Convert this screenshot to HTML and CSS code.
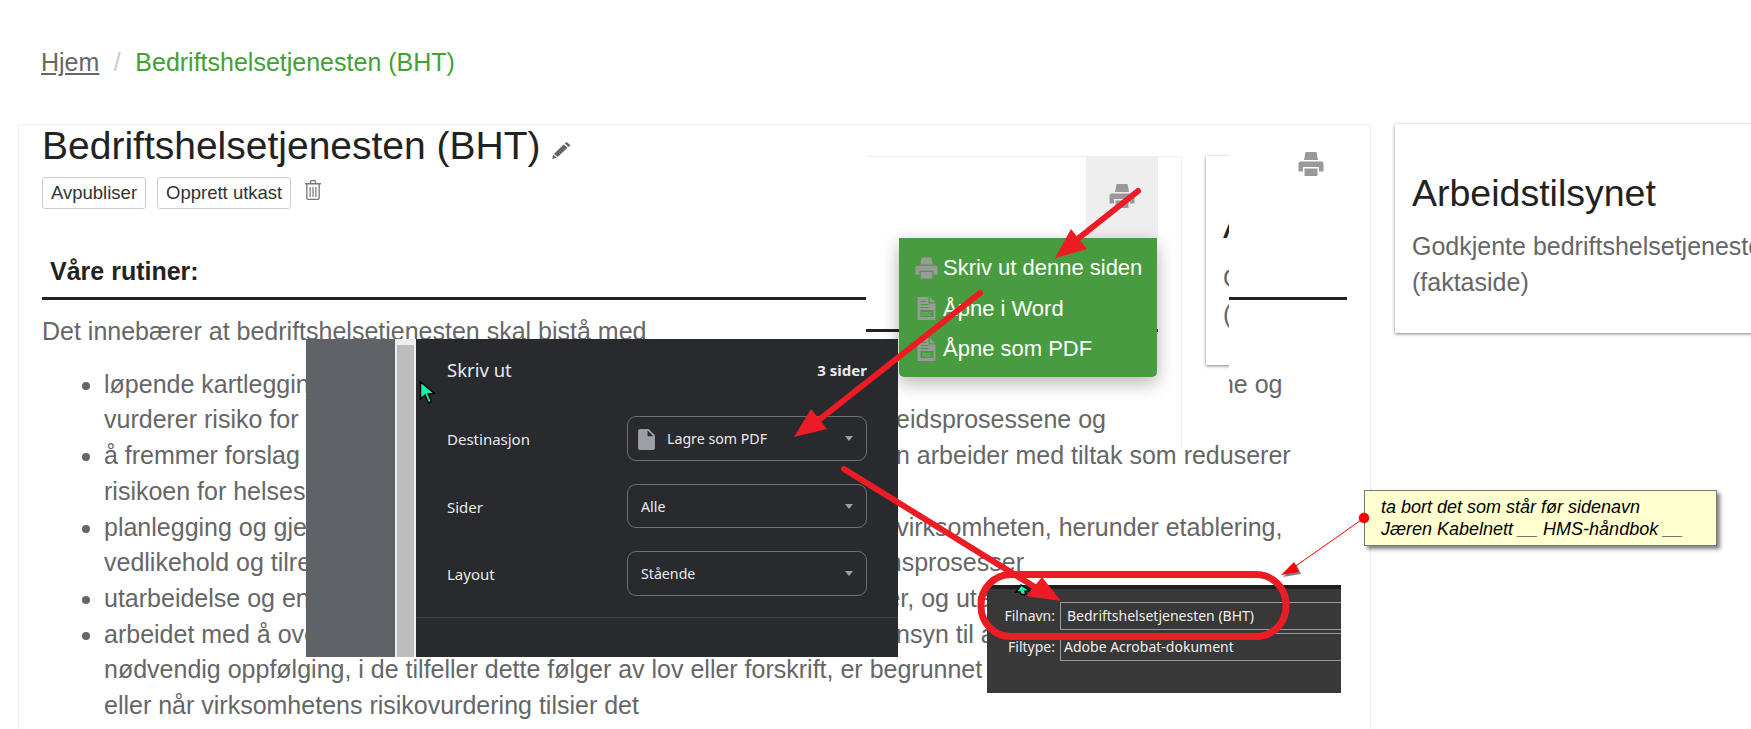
FILE: index.html
```html
<!DOCTYPE html>
<html lang="no">
<head>
    <meta charset="UTF-8">
    <title>Bedriftshelsetjenesten (BHT)</title>
    <link rel="stylesheet" href="styles.css">
</head>
<body>
    <nav class="breadcrumb">
        <a href="#">Hjem</a>
        <span class="crumb-sep">/</span>
        <span class="crumb-current">Bedriftshelsetjenesten (BHT)</span>
    </nav>

    <div class="page-row">
        <main class="main-card">
            <h1 class="page-title">Bedriftshelsetjenesten (BHT)
                <svg class="edit-icon" viewBox="0 0 20 18"><path d="M13.5 1.5l2-1.500 4 3.500-2 1.800zM12.300 2.600l4 3.600L6 16 2 12.400zM1.400 13.400l3.600 3.300L0 18z"/></svg>
            </h1>
            <div class="actions">
                <button class="btn">Avpubliser</button>
                <button class="btn">Opprett utkast</button>
                <svg class="trash-icon" viewBox="0 0 16 20"><path d="M5 3V1.500C5 .7 5.700 0 6.500 0h3C10.300 0 11 .7 11 1.500V3h5v1.500h-1.200V18c0 1.100-.9 2-2 2H3.200c-1.100 0-2-.9-2-2V4.500H0V3zm1.200 0h3.600V1.200H6.200zM2.500 4.500V18c0 .4.300.8.700.8h9.600c.4 0 .7-.4.700-.8V4.500zM4.500 7h1.200v10H4.500zm2.900 0h1.200v10H7.400zm2.900 0h1.200v10h-1.200z"/></svg>
            </div>
            <h2 class="section-title">Våre rutiner:</h2>
            <p class="intro">Det innebærer at bedriftshelsetjenesten skal bistå med</p>
            <ul class="duties">
                <li>løpende kartlegging av arbeidsmiljøet, herunder for hvordan virksomheten kartlegger arbeidsforholdene og<br>vurderer risiko for helseskade ved arbeid, og hvordan dette påvirker arbeidsprosessene og</li>
                <li>å fremmer forslag til forbedringer og gir råd til ledelsen, når virksomheten arbeider med tiltak som reduserer<br>risikoen for helseskader</li>
                <li>planlegging og gjennomføring til forebyggende, helsefremmende tiltak i virksomheten, herunder etablering,<br>vedlikehold og tilrettelegging av arbeidsplassen i arbeids- og produksjonsprosesser</li>
                <li>utarbeidelse og endring av alle planer, rutiner, retningslinjer og instrukser, og utenfor</li>
                <li>arbeidet med å overvåke nøye helsen for arbeidstakerne med særlig hensyn til arbeid<br>nødvendig oppfølging, i de tilfeller dette følger av lov eller forskrift, er begrunnet i risiko<br>eller når virksomhetens risikovurdering tilsier det</li>
            </ul>
        </main>
        <aside class="info-card">
            <h3>Arbeidstilsynet</h3>
            <p>Godkjente bedriftshelsetjenester<br>(faktaside)</p>
        </aside>
    </div>

    <!-- innlimte utklipp oppå siden -->
    <div class="paste-cover">
        <div class="paste-rule"></div>
        <div class="print-box">
            <svg class="print-icon" viewBox="0 0 26 24"><use href="#printer"/></svg>
        </div>
    </div>
    <div class="paste-edge"></div>

    <div class="mini-clip">
        <div class="info-card mini-card">
            <h3>Arbeidstilsynet</h3>
            <p>Godkjente bedriftshelsetjenester<br>(faktaside)</p>
        </div>
    </div>
    <svg class="print-icon print-loose" viewBox="0 0 26 24"><use href="#printer"/></svg>

    <div class="print-menu">
        <a class="menu-item">
            <svg class="menu-icon" viewBox="0 0 26 24"><use href="#printer"/></svg>
            Skriv ut denne siden
        </a>
        <a class="menu-item">
            <svg class="menu-icon doc-icon" viewBox="0 0 18 23">
                <path d="M0 0h11v6.500h7V23H0zM12.200 0L18 5.300h-5.800z"/>
                <path class="doc-cut" d="M3 4h6v1H3zM3 7h8v1H3zM3 10h8v1H3zM3 13h13v7H3z"/>
                <text x="4" y="18.500">DOC</text>
            </svg>
            Åpne i Word
        </a>
        <a class="menu-item">
            <svg class="menu-icon doc-icon" viewBox="0 0 18 23">
                <path d="M0 0h11v6.500h7V23H0zM12.200 0L18 5.300h-5.800z"/>
                <path class="doc-cut" d="M3 4h6v1H3zM3 7h8v1H3zM3 10h8v1H3zM3 13h13v7H3z"/>
                <text x="4.500" y="18.500">PDF</text>
            </svg>
            Åpne som PDF
        </a>
    </div>

    <div class="print-dialog">
        <div class="preview-pane"></div>
        <div class="preview-scroll"></div>
        <div class="print-settings">
            <div class="print-head">
                <span class="print-title">Skriv ut</span>
                <span class="print-pages">3 sider</span>
            </div>
            <div class="print-row">
                <span>Destinasjon</span>
                <div class="fake-select">
                    <svg class="file-icon" viewBox="4 2 16 20"><path d="M6 2c-1.100 0-2 .9-2 2v16c0 1.100.9 2 2 2h12c1.100 0 2-.9 2-2V8l-6-6H6zm7 7V3.500L18.500 9H13z"/></svg>
                    <span class="select-pdf">Lagre som PDF</span>
                </div>
            </div>
            <div class="print-row">
                <span>Sider</span>
                <div class="fake-select">Alle</div>
            </div>
            <div class="print-row">
                <span>Layout</span>
                <div class="fake-select">Stående</div>
            </div>
            <div class="print-sep"></div>
        </div>
    </div>

    <div class="save-dialog">
        <div class="save-strip"></div>
        <div class="save-row">
            <label>Filnavn:</label>
            <div class="save-input save-name">Bedriftshelsetjenesten (BHT)</div>
        </div>
        <div class="save-row">
            <label>Filtype:</label>
            <div class="save-input">Adobe Acrobat-dokument</div>
        </div>
    </div>

    <div class="note">ta bort det som står før sidenavn<br>Jæren Kabelnett __ HMS-håndbok __</div>

    <svg class="markup" viewBox="0 0 1751 729">
        <defs>
            <g id="printer">
                <path d="M7.500 0h11l1.500 8H6z"/>
                <path d="M2.500 9.500h21c1 0 2 1 2 2v8h-4.500v-4.500H5v4.500H.5v-8c0-1 1-2 2-2z"/>
                <path d="M6.500 16.500h13V24h-13z"/>
            </g>
        </defs>
        <!-- muspeker -->
        <path class="cursor" d="M420.500 382v17l4.500-4 3.500 8 3-1.500-3.500-7.500 6.500-.5z"/>
        <path class="cursor" d="M1021 585l-5 7 4-.5 1 3 5 0-1-3 5-.5z"/>
        <!-- piler -->
        <line class="arrow" x1="1138" y1="191" x2="1070" y2="245"/>
        <polygon class="arrow-head" points="1055,258 1071,229 1087,249"/>
        <line class="arrow" x1="980" y1="293" x2="815" y2="423"/>
        <polygon class="arrow-head" points="794,437 811,409 827,429"/>
        <line class="arrow" x1="844" y1="469" x2="1038" y2="589"/>
        <polygon class="arrow-head" points="1061,601 1026,596 1042,577"/>
        <rect class="ring" x="981" y="574.500" width="305" height="62" rx="30"/>
        <!-- merknad -->
        <line class="note-line" x1="1364" y1="518" x2="1293" y2="568"/>
        <polygon class="note-tip-shadow" points="1283,577 1296,564 1301,574"/>
        <polygon class="note-tip" points="1281,575 1294,562 1299,572"/>
        <circle class="note-dot" cx="1364" cy="518" r="5"/>
    </svg>
</body>
</html>
```

FILE: styles.css
```css
* {
    box-sizing: border-box;
}
html, body {
    margin: 0;
    height: 729px;
    overflow: hidden;
}
body {
    position: relative;
    background: #fff;
    font-family: "Liberation Sans", Arial, sans-serif;
    font-size: 25px;
    line-height: 35.7px;
    color: #666;
}
.breadcrumb {
    display: flex;
    gap: 14.500px;
    height: 124px;
    padding: 45px 0 0 41px;
    font-size: 25px;
}
.breadcrumb a {
    color: #666;
    text-decoration: underline;
}
.crumb-sep {
    color: #ccc;
}
.crumb-current {
    color: #43a035;
}
.page-row {
    display: flex;
    align-items: flex-start;
    gap: 24px;
    padding-left: 18px;
}
.main-card {
    flex: none;
    width: 1353px;
    height: 640px;
    padding: 0 23px;
    border: 1px solid #eee;
}
.page-title {
    margin: 0;
    font-size: 39px;
    font-weight: 400;
    line-height: 42px;
    color: #222;
}
.edit-icon {
    width: 19px;
    height: 17px;
    margin-left: 1px;
    fill: #666;
}
.actions {
    display: flex;
    align-items: flex-start;
    gap: 11px;
    margin-top: 10px;
}
.btn {
    height: 32px;
    padding: 0 8px;
    border: 1px solid #ccc;
    border-radius: 3px;
    background: #fff;
    font-family: inherit;
    font-size: 18.500px;
    color: #333;
}
.trash-icon {
    width: 16px;
    height: 20px;
    margin: 3px 0 0 3px;
    fill: #777;
}
.section-title {
    margin: 47px 0 0;
    padding: 0 0 11px 8px;
    border-bottom: 3px solid #222;
    font-size: 25px;
    line-height: 30px;
    color: #222;
}
.intro {
    margin: 14px 0 0;
}
.duties {
    margin: 17px 0 0;
    padding-left: 62px;
}

.info-card {
    flex: none;
    width: 600px;
    height: 209px;
    padding: 48px 17px 0;
    background: #fff;
    box-shadow: 0 1px 3px rgba(0, 0, 0, 0.5);
}
.info-card h3 {
    margin: 0;
    font-size: 37.500px;
    font-weight: 400;
    line-height: 42px;
    color: #222;
}
.info-card p {
    margin: 15px 0 0;
}

/* utklipp */
.paste-cover {
    position: absolute;
    left: 866px;
    top: 125px;
    width: 363px;
    height: 275px;
    background: #fff;
}
.paste-rule {
    position: absolute;
    left: 0;
    top: 204px;
    width: 292px;
    height: 3px;
    background: #222;
}
.paste-cover::before {
    content: "";
    position: absolute;
    left: 0;
    top: 31px;
    width: 316px;
    height: 1px;
    background: #eee;
}
.paste-edge {
    position: absolute;
    left: 1181px;
    top: 157px;
    width: 1px;
    height: 293px;
    background: #eee;
}
.print-box {
    position: absolute;
    left: 220px;
    top: 32px;
    width: 72px;
    height: 81px;
    background: #eee;
}
.print-icon {
    width: 26px;
    height: 24px;
    fill: #999;
}
.print-box .print-icon {
    position: absolute;
    left: 23px;
    top: 27px;
}
.print-loose {
    position: absolute;
    left: 1298px;
    top: 152px;
}
.mini-clip {
    position: absolute;
    left: 1196px;
    top: 150px;
    width: 33px;
    height: 225px;
    overflow: hidden;
}
.mini-card {
    margin: 6px 0 0 10px;
}

.print-menu {
    position: absolute;
    left: 899px;
    top: 238px;
    width: 258px;
    height: 139px;
    padding-top: 10px;
    border-radius: 0 0 5px 5px;
    background: #489b3f;
    box-shadow: 0 6px 18px rgba(0, 0, 0, 0.3);
    color: #fff;
    font-size: 22px;
}
.menu-item {
    display: flex;
    align-items: center;
    gap: 5px;
    height: 40.500px;
    padding-left: 16px;
}
.menu-icon {
    width: 23px;
    height: 22px;
    fill: #999;
}
.doc-icon {
    padding: 0 2px;
    height: 23px;
}
.doc-cut {
    fill: #489b3f;
}
.doc-icon text {
    font-family: "Liberation Sans", Arial, sans-serif;
    font-size: 4.500px;
    font-weight: 700;
}

.print-dialog {
    position: absolute;
    left: 306px;
    top: 339px;
    width: 592px;
    height: 318px;
    display: flex;
    background: #292a2d;
    font-family: "Noto Sans", sans-serif;
    font-size: 15px;
    line-height: 20px;
    color: #e8eaed;
}
.preview-pane {
    flex: none;
    width: 89px;
    background: #5f6267;
}
.preview-scroll {
    flex: none;
    width: 21px;
    border: solid #eee;
    border-width: 6px 2px 0;
    background: #bdbdbd;
}
.print-settings {
    flex: 1;
    padding: 0 31px;
    position: relative;
}
.print-head {
    display: flex;
    justify-content: space-between;
    align-items: center;
    height: 62px;
    margin-bottom: 15px;
}
.print-title {
    font-size: 18.500px;
}
.print-pages {
    font-size: 15px;
    font-weight: 700;
}
.print-row {
    display: grid;
    grid-template-columns: 180px 1fr;
    align-items: center;
    height: 44.500px;
    margin-bottom: 23px;
}
.print-row > span {
    padding-top: 2px;
}
.fake-select {
    position: relative;
    display: flex;
    align-items: center;
    height: 44.500px;
    padding: 2px 0 0 13px;
    border: 1px solid #6e6f72;
    border-radius: 9px;
    font-size: 14.200px;
}
.fake-select::after {
    content: "";
    position: absolute;
    right: 13px;
    top: 19px;
    border: 4px solid transparent;
    border-top: 5px solid #9aa0a6;
}
.file-icon {
    width: 17px;
    height: 21px;
    margin-right: 12px;
    margin-left: -3px;
    fill: #9aa0a6;
}
.print-sep {
    position: absolute;
    left: 0;
    right: 0;
    top: 278px;
    height: 1px;
    background: #3f4043;
}

.save-dialog {
    position: absolute;
    left: 987px;
    top: 585px;
    width: 354px;
    height: 108px;
    background: #383838;
    font-family: "Noto Sans", sans-serif;
    font-size: 14px;
    line-height: 26px;
    color: #eee;
}
.save-strip {
    height: 4px;
    margin-bottom: 13px;
    background: #1e1e1e;
}
.save-row {
    display: grid;
    grid-template-columns: 68px 1fr;
    column-gap: 5px;
    align-items: center;
    margin-bottom: 3px;
}
.save-row label {
    text-align: right;
}
.save-input {
    height: 28px;
    padding-left: 3px;
    border: 1px solid #9a9a9a;
    border-right: 0;
}
.save-name {
    padding-left: 6px;
}

.note {
    position: absolute;
    left: 1364px;
    top: 490px;
    width: 353px;
    height: 56px;
    padding: 5px 0 0 16px;
    border: 1px solid #777;
    background: #ffffcf;
    box-shadow: 3px 3px 4px rgba(0, 0, 0, 0.5);
    font-size: 18px;
    font-style: italic;
    line-height: 22px;
    color: #000;
}

.markup {
    position: absolute;
    left: 0;
    top: 0;
    width: 1751px;
    height: 729px;
    pointer-events: none;
}
.cursor {
    fill: #19f2b0;
    stroke: #000;
    stroke-width: 1.500;
}
.arrow {
    stroke: #ed1c24;
    stroke-width: 6;
    stroke-linecap: round;
}
.arrow-head {
    fill: #ed1c24;
}
.ring {
    fill: none;
    stroke: #ed1c24;
    stroke-width: 7;
}
.note-line {
    stroke: #f00;
    stroke-width: 1;
}
.note-tip {
    fill: #f00;
}
.note-tip-shadow {
    fill: rgba(0, 0, 0, 0.5);
}
.note-dot {
    fill: #f00;
    stroke: #a00;
    stroke-width: 0.500;
}
```
